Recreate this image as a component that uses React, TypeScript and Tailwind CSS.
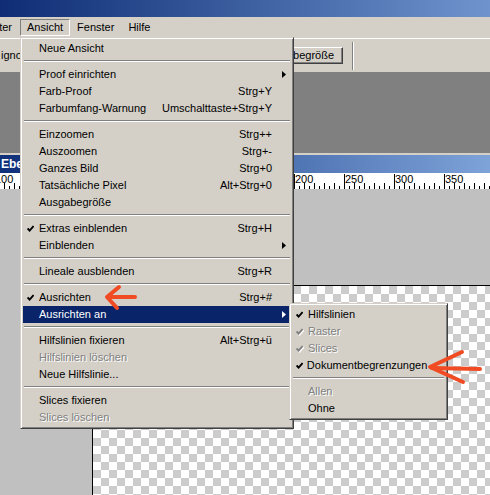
import React from 'react';

type Row =
  | 'sep'
  | { label: string; shortcut?: string; checked?: boolean; disabled?: boolean; sub?: boolean; active?: boolean };

const viewMenu: Row[] = [
  { label: 'Neue Ansicht' },
  'sep',
  { label: 'Proof einrichten', sub: true },
  { label: 'Farb-Proof', shortcut: 'Strg+Y' },
  { label: 'Farbumfang-Warnung', shortcut: 'Umschalttaste+Strg+Y' },
  'sep',
  { label: 'Einzoomen', shortcut: 'Strg++' },
  { label: 'Auszoomen', shortcut: 'Strg+-' },
  { label: 'Ganzes Bild', shortcut: 'Strg+0' },
  { label: 'Tatsächliche Pixel', shortcut: 'Alt+Strg+0' },
  { label: 'Ausgabegröße' },
  'sep',
  { label: 'Extras einblenden', shortcut: 'Strg+H', checked: true },
  { label: 'Einblenden', sub: true },
  'sep',
  { label: 'Lineale ausblenden', shortcut: 'Strg+R' },
  'sep',
  { label: 'Ausrichten', shortcut: 'Strg+#', checked: true },
  { label: 'Ausrichten an', sub: true, active: true },
  'sep',
  { label: 'Hilfslinien fixieren', shortcut: 'Alt+Strg+ü' },
  { label: 'Hilfslinien löschen', disabled: true },
  { label: 'Neue Hilfslinie...' },
  'sep',
  { label: 'Slices fixieren' },
  { label: 'Slices löschen', disabled: true },
];

const snapMenu: Row[] = [
  { label: 'Hilfslinien', checked: true },
  { label: 'Raster', checked: true, disabled: true },
  { label: 'Slices', checked: true, disabled: true },
  { label: 'Dokumentbegrenzungen', checked: true },
  'sep',
  { label: 'Allen', disabled: true },
  { label: 'Ohne' },
];

const Check = ({ color }: { color: string }) => (
  <svg width="7" height="7" viewBox="0 0 7 7" className="block">
    <path d="M0.6 3.4 L2.6 5.6 L6.6 1" fill="none" stroke={color} strokeWidth="1.9" />
  </svg>
);

const SubArrow = ({ color }: { color: string }) => (
  <svg width="4" height="7" viewBox="0 0 4 7" className="block">
    <path d="M0 0 L4 3.5 L0 7 Z" fill={color} />
  </svg>
);

const Menu = ({ rows, className }: { rows: Row[]; className: string }) => (
  <div
    className={`absolute bg-[#d4d0c8] border border-t-[#d4d0c8] border-l-[#d4d0c8] border-r-[#404040] border-b-[#404040] p-[2px] shadow-[inset_1px_1px_0_#ffffff,inset_-1px_-1px_0_#808080] ${className}`}
  >
    {rows.map((r, i) => {
      if (r === 'sep') {
        return (
          <div key={i} className="h-[9px] pt-[3px] px-[1px]">
            <div className="h-[2px] border-t border-t-[#808080] border-b border-b-white" />
          </div>
        );
      }
      const dim = r.disabled ? 'text-[#808080] [text-shadow:1px_1px_0_#ffffff]' : '';
      const fg = r.active ? 'bg-[#0a246a] text-white' : 'text-black';
      return (
        <div key={i} className={`flex items-center h-[17px] pr-[5px] ${fg}`}>
          <div className="w-[16px] pl-[4px]">
            {r.checked ? (
              <div className="relative">
                {r.disabled ? (
                  <div className="absolute left-[1px] top-[1px]">
                    <Check color="#ffffff" />
                  </div>
                ) : null}
                <div className="relative">
                  <Check color={r.disabled ? '#808080' : r.active ? '#ffffff' : '#000000'} />
                </div>
              </div>
            ) : null}
          </div>
          <span className={`flex-1 whitespace-nowrap ${dim}`}>{r.label}</span>
          {r.shortcut ? <span className="whitespace-nowrap">{r.shortcut}</span> : null}
          <div className="w-[14px] flex justify-end">
            {r.sub ? <SubArrow color={r.active ? '#ffffff' : '#000000'} /> : null}
          </div>
        </div>
      );
    })}
  </div>
);

// only the labels that are not hidden behind the open menu
const rulerLabels = [-100, 200, 250, 300, 350];

const Ruler = () => {
  const ticks: React.ReactNode[] = [];
  for (let v = -100; v <= 400; v += 5) {
    const x = 94 + v + 0.5;
    const h = v % 50 === 0 ? 15 : v % 10 === 0 ? 6 : 3;
    ticks.push(<line key={`t${v}`} x1={x} x2={x} y1={16 - h} y2={16} stroke="#000" strokeWidth="1" />);
  }
  return (
    <div className="h-[16px] bg-white">
      <svg width="490" height="16" className="block">
        {ticks}
        {rulerLabels.map((v) => (
          <text key={v} x={94 + v + 1} y={10} fontSize="11" fontFamily="'Liberation Sans', Arial, sans-serif" fill="#000">
            {Math.abs(v)}
          </text>
        ))}
      </svg>
    </div>
  );
};

export default function App() {
  return (
    <div className="relative w-[490px] h-[495px] overflow-hidden bg-[#c0c0c0] text-[11px] leading-[17px] font-['Liberation_Sans',Arial,sans-serif] flex flex-col">
      {/* app title bar */}
      <div className="h-[17px] bg-gradient-to-r from-[#0f2c74] to-[#6f94cd]" />

      {/* menu bar */}
      <div className="h-[21px] bg-[#d4d0c8] flex items-start pt-[2px]">
        <div className="h-[17px] w-[40px] ml-[-20px] pr-[7px] flex justify-end border border-transparent leading-[15px]">Filter</div>
        <div className="h-[17px] px-[6px] border border-t-[#808080] border-l-[#808080] border-r-white border-b-white leading-[15px]">
          Ansicht
        </div>
        <div className="h-[17px] px-[6px] border border-transparent leading-[15px]">Fenster</div>
        <div className="h-[17px] px-[6px] border border-transparent leading-[15px]">Hilfe</div>
      </div>

      {/* toolbar */}
      <div className="h-[34px] bg-[#d4d0c8] border-t border-t-white flex items-center">
        <div className="w-[253px] pl-[1px]">ignorieren</div>
        <div className="w-[90px] h-[17px] flex items-center justify-center border border-t-white border-l-white border-r-[#404040] border-b-[#404040] shadow-[inset_-1px_-1px_0_#808080]">
          Ausgabegröße
        </div>
        <div className="ml-[9px] h-[28px] w-[2px] border-l border-l-[#808080] border-r border-r-white" />
      </div>

      {/* workspace */}
      <div className="h-[81px] bg-[#808080]" />

      {/* document window */}
      <div className="flex-1 flex flex-col border-t-2 border-t-[#d4d0c8]">
        <div className="h-[18px] bg-gradient-to-r from-[#10307a] to-[#7ea3d9] text-white font-bold text-[12px] pl-[1px] leading-[18px]">
          Ebene 1
        </div>
        <Ruler />
        <div className="flex-1 bg-[#c0c0c0] pl-[92px] pt-[96px] flex flex-col">
          <div className="flex-1 border-l border-t border-black bg-[image:repeating-conic-gradient(#cccccc_0%_25%,#ffffff_0%_50%)] bg-[length:16px_16px]" />
        </div>
      </div>

      {/* menus */}
      <Menu rows={viewMenu} className="left-[20px] top-[37px] w-[274px]" />
      <Menu rows={snapMenu} className="left-[289px] top-[303px] w-[159px]" />

      {/* annotation arrows */}
      <svg width="490" height="495" className="absolute left-0 top-0 pointer-events-none">
        <g fill="none" stroke="#f04b22" strokeWidth="4" strokeLinecap="round" strokeLinejoin="round">
          <path d="M135 297 L108 297" />
          <path d="M119 287 L107 297 L117 308" />
          <path d="M480 369 L432 368" />
          <path d="M462 352 L430 367 L463 382" />
        </g>
      </svg>
    </div>
  );
}
